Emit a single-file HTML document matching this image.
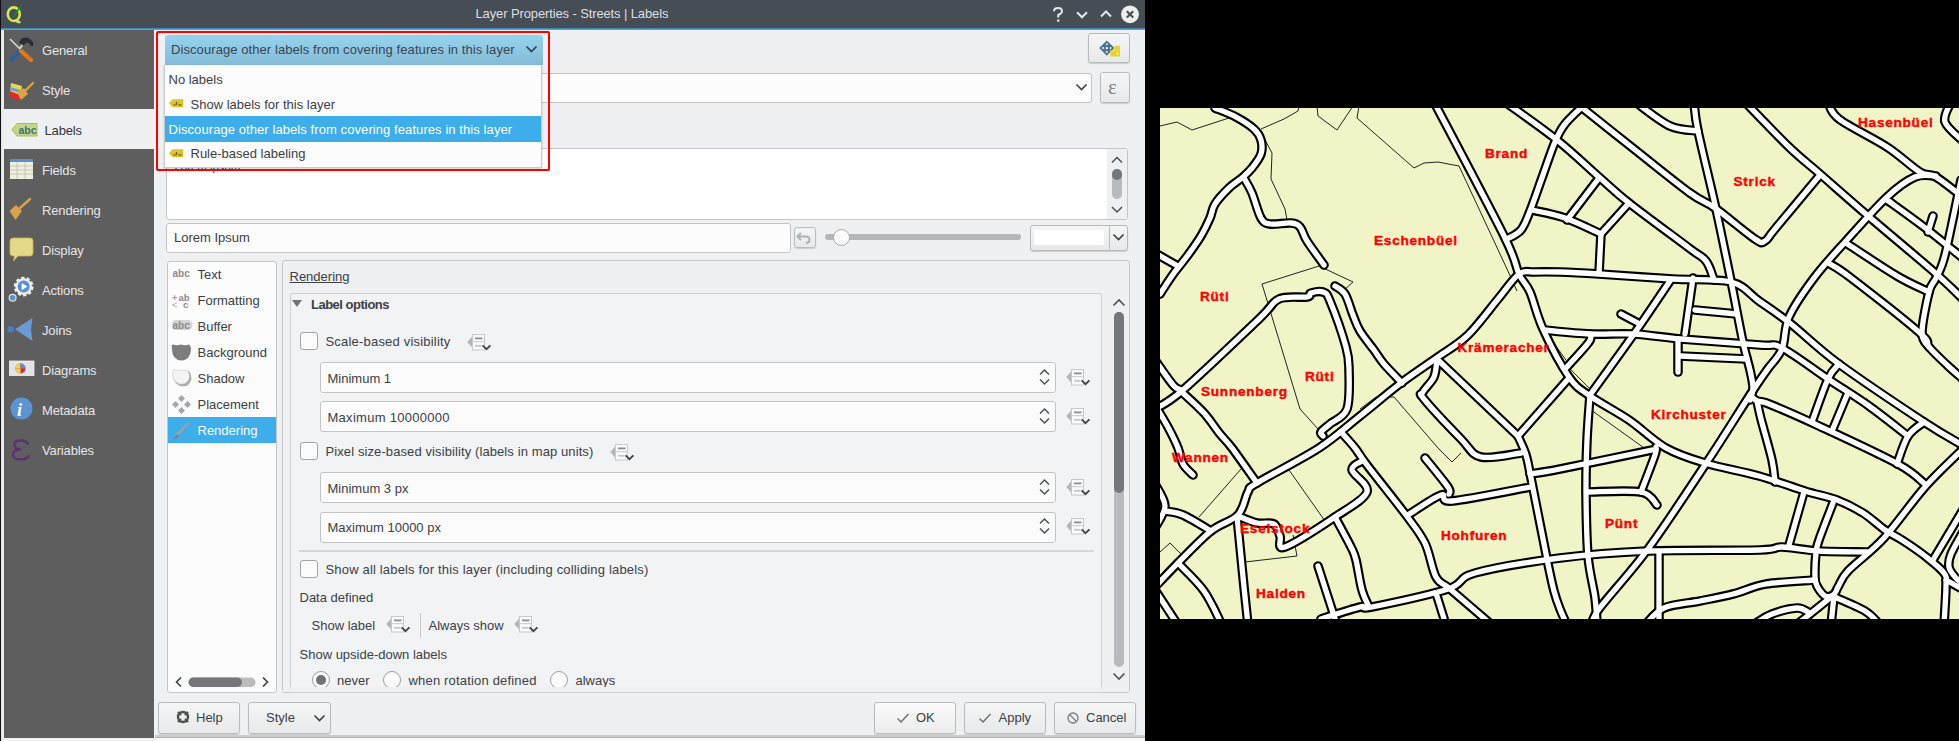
<!DOCTYPE html>
<html><head><meta charset="utf-8">
<style>
*{margin:0;padding:0;box-sizing:border-box}
html,body{width:1959px;height:741px;overflow:hidden;background:#000;font-family:"Liberation Sans",sans-serif}
.a{position:absolute}
svg.a{overflow:visible}
.t{position:absolute;font-size:13px;line-height:15px;white-space:nowrap;color:#3b4046}
.dlg{position:absolute;left:0;top:0;width:1145px;height:741px;background:#eff0f1;overflow:hidden}
.sb .t{color:#e6e6e6;letter-spacing:-0.15px}
.field{position:absolute;background:#fcfcfc;border:1px solid #c2c4c6;border-radius:3px}
.btn{position:absolute;border:1px solid #b9bbbd;border-radius:3px;background:linear-gradient(#f4f5f5,#e8e9ea);box-shadow:0 1px 1px rgba(0,0,0,.15)}
.chk{position:absolute;width:18px;height:18px;border:1px solid #a3a5a7;border-radius:3px;background:#fcfcfc}
.radio{position:absolute;width:18px;height:18px;border:1px solid #9c9ea0;border-radius:50%;background:#fcfcfc}
</style></head>
<body>
<svg width="0" height="0" style="position:absolute">
  <defs>
    <g id="dd">
      <path d="M0.3 8L5.4 2.2V13.8Z" fill="#b3b5b7"/>
      <rect x="5.5" y="0.5" width="12" height="15.5" fill="#fafafa" stroke="#c6c8ca"/>
      <path d="M5.5 7.6H17.5" stroke="#cfd1d3" stroke-width="1.2"/>
      <path d="M8 4.4H15.5" stroke="#8c8f92" stroke-width="1.8"/>
      <path d="M8 11.8H14.5" stroke="#c4c6c8" stroke-width="1.8"/>
      <path d="M15.6 11.3L19.5 15.2L23.4 11.3" fill="none" stroke="#3f4348" stroke-width="1.8"/>
    </g>
    <g id="spin">
      <path d="M1 6.5L5.5 2L10 6.5M1 11.5L5.5 16L10 11.5" fill="none" stroke="#4d5157" stroke-width="1.5"/>
    </g>
    <g id="tag">
      <path d="M0 4.2L3.5 0.3H14.3V8.2H3.5Z" fill="#d9c52c"/>
      <path d="M4.5 5.9h2M7.5 3v3M9.5 5.9h3" stroke="#6b6420" stroke-width="1.3"/>
    </g>
  </defs>
</svg>
<div class="dlg">
  <!-- title bar -->
  <div class="a" style="left:0;top:0;width:1145px;height:28px;background:#474d55"></div>
  <div class="a" style="left:0;top:28px;width:1145px;height:2px;background:linear-gradient(#3a80ab,#5eaedb)"></div>
  <div class="t" style="left:475.5px;top:6.3px;color:#dcdfe2;font-size:13px;letter-spacing:-0.12px">Layer Properties - Streets | Labels</div>
  <div class="a" style="left:0;top:0;width:1px;height:741px;background:#111"></div>
  <svg class="a" style="left:0;top:0" width="30" height="28">
    <path d="M7.5 22L10 19.5" stroke="#1f6e12" stroke-width="2.2"/>
    <ellipse cx="13.8" cy="14.2" rx="6" ry="6.8" fill="none" stroke="#d6e65a" stroke-width="2.6"/>
    <path d="M15 19.5Q17 22.5 20.5 22" fill="none" stroke="#d6e65a" stroke-width="2.4"/>
    <path d="M12.5 17.5L18 8.5Q20 6 22 5Q21.5 8 19 10L14 18Z" fill="#1d8a10"/>
  </svg>
  <svg class="a" style="left:1045px;top:0" width="100" height="28">
    <path d="M9 11.3Q9 8 13 8Q17 8 17 11.3Q17 13.5 13.2 15V17.5" fill="none" stroke="#e4e6e8" stroke-width="2"/>
    <rect x="12" y="19.5" width="2.4" height="2.2" fill="#e4e6e8"/>
    <path d="M32 12.3L37 17.3L42 12.3" fill="none" stroke="#e4e6e8" stroke-width="2"/>
    <path d="M56 16.5L61 11.5L66 16.5" fill="none" stroke="#e4e6e8" stroke-width="2"/>
    <circle cx="85" cy="14.3" r="8.9" fill="#eceded"/>
    <path d="M81.8 11.2L88.2 17.5M88.2 11.2L81.8 17.5" stroke="#474d55" stroke-width="2.1"/>
  </svg>

  <!-- sidebar -->
  <div class="sb">
    <div class="a" style="left:1px;top:30px;width:3px;height:711px;background:#e9eaeb"></div>
    <div class="a" style="left:4px;top:30px;width:150px;height:708px;background:#5e5e5e"></div>
    <div class="a" style="left:4px;top:109px;width:150px;height:40px;background:#eff0f1"></div>
    <div class="a" style="left:154px;top:30px;width:2px;height:711px;background:#f1f2f3"></div>
    <div class="t" style="left:42px;top:43px">General</div>
    <div class="t" style="left:42px;top:83px">Style</div>
    <div class="t" style="left:44.5px;top:123px;color:#31363b">Labels</div>
    <div class="t" style="left:42px;top:163px">Fields</div>
    <div class="t" style="left:42px;top:203px">Rendering</div>
    <div class="t" style="left:42px;top:243px">Display</div>
    <div class="t" style="left:42px;top:283px">Actions</div>
    <div class="t" style="left:42px;top:323px">Joins</div>
    <div class="t" style="left:42px;top:363px">Diagrams</div>
    <div class="t" style="left:42px;top:403px">Metadata</div>
    <div class="t" style="left:42px;top:443px">Variables</div>
    <!-- icons -->
    <svg class="a" style="left:0;top:30px" width="40" height="440">
      <!-- general -->
      <path d="M10 9L20 19" stroke="#d8d8d8" stroke-width="1.6"/>
      <path d="M11.5 29.5L19 22" stroke="#2e5e9e" stroke-width="4" stroke-linecap="round"/>
      <path d="M21 21L31 30" stroke="#e8780e" stroke-width="4.2" stroke-linecap="round"/>
      <path d="M19.5 11.5Q21 7.5 26 7.5Q31 8 33.5 13.5L33 16L30.5 16Q29 12.5 26.5 12.5L23 16L19.5 13Z" fill="#2b2f33"/><path d="M22.5 15L19.5 18.5" stroke="#cfcfcf" stroke-width="2"/>
      <!-- style -->
      <path d="M11 53L22 56L20 68L10 64Z" fill="#e8d84a"/>
      <path d="M10 57L21 60L20 63L10 60Z" fill="#6aa0d8"/>
      <path d="M10 61L20 65L19 71L9 66Z" fill="#e02a2a"/>
      <path d="M17 62L24 58L28 64L21 70Z" fill="#d9a24c"/>
      <path d="M25 61L33 53" stroke="#d9a24c" stroke-width="2.4" stroke-linecap="round"/>
      <!-- labels -->
      <path d="M12 99.5L17 93.5H37V106H17Z" fill="#c4d68a" stroke="#a8bd5a" stroke-width="1"/>
      <text x="18.5" y="104" font-family="Liberation Sans" font-size="10.5" font-weight="bold" fill="#3c6e78">abc</text>
      <!-- fields -->
      <rect x="10" y="129" width="23" height="20" fill="#efefe0"/>
      <rect x="10" y="129" width="23" height="3" fill="#5a8ed0"/>
      <path d="M10 136H33M10 140H33M10 144H33M17 132V149M25 132V149" stroke="#bfbfa8" stroke-width="0.8"/>
      <!-- rendering -->
      <path d="M9.5 181L16 175L22 181L15.5 190Z" fill="#d9a24c"/>
      <path d="M20 178L30 169" stroke="#d9a24c" stroke-width="2.4" stroke-linecap="round"/>
      <!-- display -->
      <path d="M13 208H30Q33 208 33 211V223Q33 226 30 226H18L13.5 231L14.5 226H13Q10 226 10 223V211Q10 208 13 208Z" fill="#e4d98a" stroke="#c8b84a" stroke-width="0.8"/>
      <!-- actions -->
      <circle cx="23.7" cy="256.6" r="8.6" fill="none" stroke="#ececec" stroke-width="2.6" stroke-dasharray="3.2 2.2"/>
      <circle cx="23.7" cy="256.6" r="8.4" fill="#ececec"/>
      <circle cx="23.7" cy="256.6" r="6" fill="#5b8fd0"/>
      <path d="M21.7 253L27.3 256.6L21.7 260.2Z" fill="#fff"/>
      <circle cx="12.6" cy="267.7" r="4" fill="#e0e0e0"/>
      <circle cx="12.6" cy="267.7" r="2.8" fill="#5b8fd0"/>
      <!-- joins -->
      <circle cx="10.7" cy="299.3" r="3.3" fill="#4a7cc0"/>
      <path d="M15 299.3L32.5 288L31 299.3L32.5 311Z" fill="#6c9ad6"/>
      <!-- diagrams -->
      <rect x="9.5" y="331" width="24.5" height="14.5" fill="#e4e4e4" stroke="#f0f0f0" stroke-width="0.8"/>
      <circle cx="20.5" cy="338.5" r="5" fill="#e02a2a"/>
      <path d="M20.5 338.5V333.5A5 5 0 0 0 15.5 338.5Z" fill="#e8d84a"/>
      <path d="M20.5 338.5V343.5A5 5 0 0 1 15.5 338.5Z" fill="#e8d84a"/>
      <path d="M20.5 338.5V333.5A5 5 0 0 1 25.5 338.5Z" fill="#5a8ed0"/>
      <!-- metadata -->
      <circle cx="21.5" cy="378.5" r="11" fill="#5b93d4"/>
      <text x="17" y="386" font-family="Liberation Serif" font-style="italic" font-weight="bold" font-size="18" fill="#fff">i</text>
      <!-- variables -->
      <path d="M28.5 414.5Q26 410.5 21 410.5Q14.5 410.5 14.5 415Q14.5 419 21 419.5Q13 419.5 13 424.5Q13 429.5 21 429.5Q27 429.5 29 425" fill="none" stroke="#5c2f72" stroke-width="2.3"/>
    </svg>
  </div>

  <!-- field combo row -->
  <div class="field" style="left:166px;top:73px;width:926px;height:30px"></div>
  <svg class="a" style="left:1075px;top:83px" width="14" height="9"><path d="M1.5 1.5L6.5 6.5L11.5 1.5" fill="none" stroke="#3b4046" stroke-width="1.6"/></svg>
  <div class="btn" style="left:1100px;top:72px;width:30px;height:31px"></div>
  <div class="t" style="left:1108px;top:77px;font-family:'Liberation Serif',serif;font-size:21px;line-height:20px;color:#7c7f82">&#949;</div>
  <div class="btn" style="left:1088px;top:33px;width:42px;height:30px"></div>
  <svg class="a" style="left:1098px;top:38px" width="24" height="20">
    <path d="M8.8 2.5L16.4 10.1L8.8 17.7L1.2 10.1Z" fill="#4f7290"/>
    <circle cx="8.8" cy="6.3" r="1" fill="#e8eef2"/><circle cx="8.8" cy="13.9" r="1" fill="#e8eef2"/>
    <circle cx="5" cy="10.1" r="1" fill="#e8eef2"/><circle cx="12.6" cy="10.1" r="1" fill="#e8eef2"/>
    <circle cx="8.8" cy="10.1" r="1.2" fill="#e8eef2"/>
    <path d="M12.3 12.2H22V18.6H12.3Z" fill="#e6d430"/><path d="M16.5 7.8H22V12.5H16.5Z" fill="#e6d430"/>
    <circle cx="19.5" cy="15.8" r="1" fill="#f6f0b0"/>
  </svg>

  <!-- textarea -->
  <div class="a" style="left:166px;top:148px;width:962px;height:72px;background:#fff;border:1px solid #c3c5c6;border-radius:3px"></div>
  <div class="a" style="left:1107px;top:149px;width:20px;height:70px;background:#eff0f1"></div>
  <svg class="a" style="left:1110px;top:155px" width="14" height="60">
    <path d="M2 7.5L7 2.5L12 7.5" fill="none" stroke="#4d5157" stroke-width="1.5"/>
    <rect x="2" y="14" width="10" height="30" rx="5" fill="#b8babd"/>
    <rect x="2" y="14" width="10" height="11" rx="5" fill="#73777c"/>
    <path d="M2 52L7 57L12 52" fill="none" stroke="#4d5157" stroke-width="1.5"/>
  </svg>
  <div class="t" style="left:174.5px;top:160px;font-size:11.4px;color:#2f3a30">Lorem ipsum</div>

  <!-- line edit + slider -->
  <div class="field" style="left:166px;top:223px;width:625px;height:30px"></div>
  <div class="t" style="left:174px;top:230px">Lorem Ipsum</div>
  <div class="btn" style="left:794px;top:227px;width:22px;height:21px"></div>
  <svg class="a" style="left:796px;top:229px" width="18" height="17"><path d="M5 4L1.5 7.5L5 11M2 7.5H10Q13.5 7.5 13.5 11Q13.5 14 10 14" fill="none" stroke="#b0b3b6" stroke-width="2"/></svg>
  <div class="a" style="left:825px;top:234px;width:196px;height:6px;border-radius:3px;background:#b4b6b8"></div>
  <div class="a" style="left:833px;top:229px;width:17px;height:17px;border-radius:50%;background:#fcfcfc;border:1px solid #a7a9ab"></div>
  <div class="btn" style="left:1030px;top:225px;width:98px;height:26px"></div>
  <div class="a" style="left:1034px;top:230px;width:70px;height:15px;background:#fff;border-radius:2px"></div>
  <div class="a" style="left:1109px;top:226px;width:1px;height:24px;background:#b9bbbd"></div>
  <svg class="a" style="left:1112px;top:233px" width="14" height="9"><path d="M1.5 1.5L6.5 6.5L11.5 1.5" fill="none" stroke="#3b4046" stroke-width="1.6"/></svg>

  <!-- tab list -->
  <div class="a" style="left:167px;top:261px;width:110px;height:432px;background:#fcfcfc;border:1px solid #c3c5c6;border-radius:3px"></div>
  <div class="a" style="left:168px;top:417px;width:108px;height:26px;background:#3daee9"></div>
  <div class="t" style="left:197.5px;top:267px">Text</div>
  <div class="t" style="left:197.5px;top:293px">Formatting</div>
  <div class="t" style="left:197.5px;top:319px">Buffer</div>
  <div class="t" style="left:197.5px;top:345px">Background</div>
  <div class="t" style="left:197.5px;top:371px">Shadow</div>
  <div class="t" style="left:197.5px;top:397px">Placement</div>
  <div class="t" style="left:197.5px;top:423px;color:#fcfcfc">Rendering</div>
  <svg class="a" style="left:168px;top:262px" width="30" height="180">
    <text x="4.5" y="15" font-family="Liberation Sans" font-weight="bold" font-size="10" fill="#8a8c8e">abc</text>
    <text x="4" y="39" font-family="Liberation Sans" font-weight="bold" font-size="9" fill="#9a9c9e">+</text>
    <text x="10.5" y="38.5" font-family="Liberation Sans" font-weight="bold" font-size="9.5" fill="#8a8c8e">ab</text>
    <text x="4" y="46" font-family="Liberation Sans" font-size="9" fill="#a0a2a4">&lt;</text>
    <text x="15" y="46" font-family="Liberation Sans" font-weight="bold" font-size="9.5" fill="#8a8c8e">c</text>
    <rect x="4" y="58" width="20" height="10" rx="4" fill="#d2d4d6"/>
    <text x="4.5" y="67" font-family="Liberation Sans" font-weight="bold" font-size="10" fill="#8a8c8e">abc</text>
    <path d="M4 87Q3 83 5 82.5Q9 84 13 82.5Q17 84 21 82.5Q23 84 23 88Q22 98 13.5 98.5Q4 98 4 87Z" fill="#7b7d80"/>
    <path d="M5 112Q4 120 12 124Q21 126 23.5 117Q23 111 21 109Q17 110 14 109Q10 110 6 108Z" fill="#a9abad"/>
    <path d="M4.5 111Q4 119 11.5 122Q20 123 21.5 115Q21 109 19.5 108Q16 109 13.5 108Q10 109 6 107.5Z" fill="#f4f4f4" stroke="#c8c8c8" stroke-width="0.6"/>
    <path d="M13.5 133L17 136.5L13.5 140L10 136.5ZM13.5 145L17 148.5L13.5 152L10 148.5ZM7.5 139L11 142.5L7.5 146L4 142.5ZM19.5 139L23 142.5L19.5 146L16 142.5Z" fill="#a6a8aa"/>
    <path d="M6 177L9 171L20 160.5L21.5 160L21 162L11 172.5Z" fill="#a0a3a6"/>
    <path d="M5.5 177.5Q7 174 9 172.5L11 174Q8.5 176.5 5.5 177.5Z" fill="#7d8083"/>
  </svg>
  <!-- h scrollbar -->
  <svg class="a" style="left:170px;top:674px" width="104" height="16">
    <path d="M11 3.5L6.5 8L11 12.5" fill="none" stroke="#3b4046" stroke-width="1.6"/>
    <rect x="18.5" y="3.5" width="67" height="9.5" rx="4.75" fill="#b9bbbe"/>
    <rect x="18.5" y="3.5" width="53.5" height="9.5" rx="4.75" fill="#73777c"/>
    <path d="M93 3.5L97.5 8L93 12.5" fill="none" stroke="#3b4046" stroke-width="1.6"/>
  </svg>

  <!-- right panel -->
  <div class="a" style="left:282px;top:260px;width:848px;height:433px;background:#eff0f1;border:1px solid #c3c5c6;border-radius:3px"></div>
  <div class="t" style="left:289.5px;top:269px;text-decoration:underline">Rendering</div>
  <div class="a" style="left:290px;top:293px;width:812px;height:400px;border:1px solid #cdcfd0;border-radius:3px;background:#f2f3f4"></div>
  <div class="t" style="left:311px;top:297px;font-weight:bold;letter-spacing:-0.5px">Label options</div>
  <svg class="a" style="left:292px;top:300px" width="11" height="8"><path d="M0 0H10L5 7Z" fill="#6f7377"/></svg>
  <div class="chk" style="left:300px;top:332px"></div>
  <div class="t" style="left:325.5px;top:334px;letter-spacing:0.2px">Scale-based visibility</div>
  <svg class="a" style="left:467px;top:334px" width="25" height="18"><use href="#dd"/></svg>
  <div class="field" style="left:320px;top:362px;width:736px;height:31px"></div>
  <div class="t" style="left:327.5px;top:371px">Minimum 1</div>
  <svg class="a" style="left:1039px;top:368px" width="12" height="18"><use href="#spin"/></svg>
  <svg class="a" style="left:1066px;top:369px" width="25" height="18"><use href="#dd"/></svg>
  <div class="field" style="left:320px;top:401px;width:736px;height:31px"></div>
  <div class="t" style="left:327.5px;top:410px;letter-spacing:0.28px">Maximum 10000000</div>
  <svg class="a" style="left:1039px;top:407px" width="12" height="18"><use href="#spin"/></svg>
  <svg class="a" style="left:1066px;top:408px" width="25" height="18"><use href="#dd"/></svg>
  <div class="chk" style="left:300px;top:442px"></div>
  <div class="t" style="left:325.5px;top:444px;letter-spacing:0.1px">Pixel size-based visibility (labels in map units)</div>
  <svg class="a" style="left:610px;top:444px" width="25" height="18"><use href="#dd"/></svg>
  <div class="field" style="left:320px;top:472px;width:736px;height:31px"></div>
  <div class="t" style="left:327.5px;top:481px">Minimum 3 px</div>
  <svg class="a" style="left:1039px;top:478px" width="12" height="18"><use href="#spin"/></svg>
  <svg class="a" style="left:1066px;top:479px" width="25" height="18"><use href="#dd"/></svg>
  <div class="field" style="left:320px;top:512px;width:736px;height:31px"></div>
  <div class="t" style="left:327.5px;top:520px">Maximum 10000 px</div>
  <svg class="a" style="left:1039px;top:517px" width="12" height="18"><use href="#spin"/></svg>
  <svg class="a" style="left:1066px;top:518px" width="25" height="18"><use href="#dd"/></svg>
  <div class="a" style="left:299px;top:550px;width:795px;height:2px;background:#d5d7d8"></div>
  <div class="chk" style="left:300px;top:560px"></div>
  <div class="t" style="left:325.5px;top:562px;letter-spacing:0.17px">Show all labels for this layer (including colliding labels)</div>
  <div class="t" style="left:299.5px;top:590px">Data defined</div>
  <div class="t" style="left:311.5px;top:618px">Show label</div>
  <svg class="a" style="left:386px;top:616px" width="25" height="18"><use href="#dd"/></svg>
  <div class="a" style="left:420px;top:613px;width:1px;height:25px;background:#c8cacb"></div>
  <div class="t" style="left:428.5px;top:618px">Always show</div>
  <svg class="a" style="left:514px;top:616px" width="25" height="18"><use href="#dd"/></svg>
  <div class="t" style="left:299.5px;top:647px">Show upside-down labels</div>
  <div class="a" style="left:291px;top:660px;width:810px;height:26.5px;overflow:hidden">
    <div class="radio" style="left:21px;top:11px"><div class="a" style="left:3px;top:3px;width:10px;height:10px;border-radius:50%;background:#6f7377"></div></div>
    <div class="t" style="left:46px;top:13px">never</div>
    <div class="radio" style="left:92px;top:11px"></div>
    <div class="t" style="left:117.5px;top:13px;letter-spacing:0.18px">when rotation defined</div>
    <div class="radio" style="left:259px;top:11px"></div>
    <div class="t" style="left:284.5px;top:13px">always</div>
  </div>
  <div class="a" style="left:283px;top:686.5px;width:846px;height:5.5px;background:#eff0f1"></div>
  <div class="a" style="left:290px;top:294px;width:1px;height:392px;background:#cdcfd0"></div>
  <div class="a" style="left:1101px;top:294px;width:1px;height:392px;background:#cdcfd0"></div>
  <!-- v scrollbar -->
  <svg class="a" style="left:1112px;top:298px" width="14" height="9"><path d="M1.5 7.5L7 2L12.5 7.5" fill="none" stroke="#4d5157" stroke-width="1.6"/></svg>
  <div class="a" style="left:1114px;top:312px;width:10px;height:355px;border-radius:5px;background:#b8babd"></div>
  <div class="a" style="left:1114px;top:312px;width:10px;height:181px;border-radius:5px;background:#73777c"></div>
  <svg class="a" style="left:1112px;top:672px" width="14" height="9"><path d="M1.5 1.5L7 7L12.5 1.5" fill="none" stroke="#4d5157" stroke-width="1.6"/></svg>

  <!-- bottom buttons -->
  <div class="btn" style="left:158px;top:702px;width:82px;height:32px"></div>
  <svg class="a" style="left:176px;top:710px" width="14" height="14">
    <circle cx="7" cy="7" r="5" fill="none" stroke="#4d5157" stroke-width="2.4"/>
    <path d="M2 2L5 5M12 2L9 5M2 12L5 9M12 12L9 9" stroke="#4d5157" stroke-width="2.4"/>
  </svg>
  <div class="t" style="left:196px;top:710px">Help</div>
  <div class="btn" style="left:248px;top:702px;width:83px;height:32px"></div>
  <div class="t" style="left:266px;top:710px">Style</div>
  <svg class="a" style="left:313px;top:714px" width="14" height="9"><path d="M1.5 1.5L6.5 6.5L11.5 1.5" fill="none" stroke="#3b4046" stroke-width="1.6"/></svg>
  <div class="btn" style="left:874px;top:702px;width:82px;height:32px;background:linear-gradient(#fafafa,#ededee)"></div>
  <svg class="a" style="left:896px;top:712px" width="14" height="12"><path d="M1.5 6.5L5 10L12.5 2" fill="none" stroke="#6b6f73" stroke-width="1.4"/></svg>
  <div class="t" style="left:916px;top:710px">OK</div>
  <div class="btn" style="left:964px;top:702px;width:82px;height:32px"></div>
  <svg class="a" style="left:978px;top:712px" width="14" height="12"><path d="M1.5 6.5L5 10L12.5 2" fill="none" stroke="#6b6f73" stroke-width="1.4"/></svg>
  <div class="t" style="left:998.5px;top:710px">Apply</div>
  <div class="btn" style="left:1054px;top:702px;width:82px;height:32px"></div>
  <svg class="a" style="left:1066px;top:711px" width="14" height="14"><circle cx="7" cy="7" r="5" fill="none" stroke="#7a7e82" stroke-width="1.3"/><path d="M3.5 3.5L10.5 10.5" stroke="#7a7e82" stroke-width="1.3"/></svg>
  <div class="t" style="left:1086px;top:710px">Cancel</div>
  <div class="a" style="left:155px;top:738px;width:990px;height:3px;background:#fafafa"></div>
  <div class="a" style="left:155px;top:735px;width:990px;height:3px;background:#cbcccd"></div><div class="a" style="left:155px;top:737px;width:990px;height:1px;background:#b3b4b6"></div>

  <!-- popup -->
  <div class="a" style="left:165px;top:35px;width:378px;height:30px;border-radius:3px 3px 0 0;background:linear-gradient(#96d3ef,#84bbd6)"></div>
  <div class="t" style="left:171px;top:42px;color:#3a4450;letter-spacing:0.08px">Discourage other labels from covering features in this layer</div>
  <svg class="a" style="left:525px;top:45px" width="14" height="9"><path d="M1.5 1.5L6.5 6.5L11.5 1.5" fill="none" stroke="#3b4046" stroke-width="1.7"/></svg>
  <div class="a" style="left:164px;top:65px;width:378px;height:103px;background:#fcfcfc;border:1px solid #c8cacc;border-top:none;box-shadow:0 1px 2px rgba(0,0,0,.2)"></div>
  <div class="t" style="left:168.5px;top:72px">No labels</div>
  <svg class="a" style="left:169px;top:99.3px" width="15" height="9"><use href="#tag"/></svg>
  <div class="t" style="left:190.5px;top:96.5px">Show labels for this layer</div>
  <div class="a" style="left:165px;top:116.3px;width:376px;height:25.3px;background:#3daee9"></div>
  <div class="t" style="left:168.5px;top:121.5px;color:#fcfcfc;letter-spacing:0.08px">Discourage other labels from covering features in this layer</div>
  <svg class="a" style="left:169px;top:149.3px" width="15" height="9"><use href="#tag"/></svg>
  <div class="t" style="left:190.5px;top:146px">Rule-based labeling</div>
  <div class="a" style="left:156px;top:30.9px;width:394.4px;height:140.4px;border:2.4px solid #f00;border-radius:2px"></div>
</div>

<!-- map -->
<svg class="a" style="left:1160px;top:108px;overflow:hidden" width="799" height="511" viewBox="0 0 799 511">
<rect width="799" height="511" fill="#f0f4c6"/>
<g fill="none" stroke="#222" stroke-width="1" stroke-linejoin="round">
<path d="M0.0 18.0 L17.0 14.0 L32.0 22.0 L69.0 10.0"/>
<path d="M101.0 21.0 L124.0 11.0 L138.0 3.0 L139.0 -2.0"/>
<path d="M103.0 28.0 L112.0 45.0 L111.0 71.0 L125.0 101.0 L127.0 112.0"/>
<path d="M157.0 -2.0 L158.0 8.0 L177.0 22.0 L193.0 -2.0"/>
<path d="M199.0 -2.0 L197.0 10.0 L254.0 60.0 L264.0 55.0 L278.0 54.0 L299.0 58.0 L347.0 161.0 L357.0 183.0"/>
<path d="M102.0 176.0 L159.0 158.0 L193.0 174.0 L183.0 183.0"/>
<path d="M102.0 176.0 L140.0 301.0 L158.0 321.0"/>
<path d="M367.0 176.0 L381.0 214.0 L405.0 256.0"/>
<path d="M39.0 409.0 L81.0 361.0"/>
<path d="M85.0 454.0 L137.0 448.0 L133.0 427.0"/>
<path d="M129.0 362.0 L165.0 413.0"/>
<path d="M0.0 444.0 L10.0 435.0 L23.0 448.0"/>
<path d="M386.8 225.5 L406.2 252.3"/>
<path d="M408.7 259.6 L430.6 281.5"/>
<path d="M435.4 286.4 L446.4 296.1 L444.0 299.0"/>
<path d="M433.0 303.4 L484.0 339.9"/>
<path d="M200.0 301.0 L216.0 289.0 L234.0 289.0 L278.0 340.0 L292.0 354.0 L301.0 345.0"/>
<path d="M367.0 177.0 L384.3 218.2"/>
<path d="M76.0 402.0 L90.0 382.0 L165.0 331.0 L217.0 290.0"/>
</g><g fill="none" stroke="#000" stroke-width="9.6" stroke-linejoin="round" stroke-linecap="round">
<path d="M55.0 0.0 C58.5 1.5 69.5 5.5 76.0 9.0 C82.5 12.5 89.8 17.2 94.0 21.0 C98.2 24.8 99.8 27.8 101.0 32.0 C102.2 36.2 102.5 41.3 101.0 46.0 C99.5 50.7 95.0 56.2 92.0 60.0 C89.0 63.8 86.8 65.7 83.0 69.0 C79.2 72.3 73.7 75.5 69.0 80.0 C64.3 84.5 58.2 91.0 55.0 96.0 C51.8 101.0 52.3 104.7 50.0 110.0 C47.7 115.3 44.7 121.8 41.0 128.0 C37.3 134.2 32.5 140.8 28.0 147.0 C23.5 153.2 18.7 158.5 14.0 165.0 C9.3 171.5 2.3 182.5 0.0 186.0"/>
<path d="M84.0 70.0 C85.3 72.5 89.2 78.3 92.0 85.0 C94.8 91.7 98.0 104.8 101.0 110.0 C104.0 115.2 105.0 115.2 110.0 116.0 C115.0 116.8 126.0 114.5 131.0 115.0 C136.0 115.5 137.3 116.0 140.0 119.0 C142.7 122.0 143.0 126.7 147.0 133.0 C151.0 139.3 161.2 153.0 164.0 157.0"/>
<path d="M-5.0 145.0 L16.0 157.0"/>
<path d="M-5.0 301.0 C-0.3 297.8 5.7 297.0 23.0 282.0 C40.3 267.0 83.0 226.2 99.0 211.0 C115.0 195.8 111.0 194.7 119.0 191.0 C127.0 187.3 141.7 190.0 147.0 189.0 C152.3 188.0 148.3 185.8 151.0 185.0 C153.7 184.2 159.8 182.7 163.0 184.0 C166.2 185.3 166.2 183.8 170.0 193.0 C173.8 202.2 182.8 227.5 186.0 239.0 C189.2 250.5 188.8 251.7 189.0 262.0 C189.2 272.3 190.2 292.0 187.0 301.0 C183.8 310.0 174.3 312.2 170.0 316.0 C165.7 319.8 162.2 322.0 161.0 324.0 C159.8 326.0 162.7 327.3 163.0 328.0"/>
<path d="M175.0 178.0 C176.7 179.3 182.0 181.2 185.0 186.0 C188.0 190.8 190.5 200.8 193.0 207.0 C195.5 213.2 196.5 217.2 200.0 223.0 C203.5 228.8 210.0 236.5 214.0 242.0 C218.0 247.5 219.3 250.5 224.0 256.0 C228.7 261.5 239.0 271.8 242.0 275.0"/>
<path d="M-5.0 252.0 C-1.8 256.3 9.3 273.0 14.0 278.0 C18.7 283.0 21.5 281.3 23.0 282.0"/>
<path d="M23.0 285.0 C26.5 288.3 37.8 298.2 44.0 305.0 C50.2 311.8 55.3 320.2 60.0 326.0 C64.7 331.8 65.8 331.8 72.0 340.0 C78.2 348.2 92.8 369.2 97.0 375.0"/>
<path d="M-5.0 297.0 C-2.7 301.0 5.2 313.8 9.0 321.0 C12.8 328.2 15.7 334.2 18.0 340.0 C20.3 345.8 20.5 351.5 23.0 356.0 C25.5 360.5 31.3 365.2 33.0 367.0"/>
<path d="M-5.0 479.0 C-1.2 475.0 8.7 464.3 18.0 455.0 C27.3 445.7 41.0 431.0 51.0 423.0 C61.0 415.0 71.8 413.5 78.0 407.0 C84.2 400.5 84.8 389.3 88.0 384.0 C91.2 378.7 85.2 382.3 97.0 375.0 C108.8 367.7 141.8 351.2 159.0 340.0 C176.2 328.8 186.3 318.8 200.0 308.0 C213.7 297.2 228.0 284.8 241.0 275.0 C254.0 265.2 266.8 257.0 278.0 249.0 C289.2 241.0 298.0 236.7 308.0 227.0 C318.0 217.3 329.5 201.2 338.0 191.0 C346.5 180.8 353.0 170.5 359.0 166.0 C365.0 161.5 367.2 164.3 374.0 164.0 C380.8 163.7 389.2 163.7 400.0 164.0 C410.8 164.3 420.2 164.8 439.0 166.0 C457.8 167.2 491.0 169.7 513.0 171.0 C535.0 172.3 556.7 170.3 571.0 174.0 C585.3 177.7 589.0 186.0 599.0 193.0 C609.0 200.0 617.7 205.5 631.0 216.0 C644.3 226.5 656.8 239.7 679.0 256.0 C701.2 272.3 743.2 300.3 764.0 314.0 C784.8 327.7 797.3 334.0 804.0 338.0"/>
<path d="M274.0 -6.0 C285.7 16.3 329.8 99.3 344.0 128.0 C358.2 156.7 354.7 156.7 359.0 166.0 C363.3 175.3 366.0 174.8 370.0 184.0 C374.0 193.2 376.5 206.8 383.0 221.0 C389.5 235.2 401.2 257.8 409.0 269.0 C416.8 280.2 420.0 280.8 430.0 288.0 C440.0 295.2 456.3 303.3 469.0 312.0 C481.7 320.7 493.3 332.8 506.0 340.0 C518.7 347.2 529.5 350.3 545.0 355.0 C560.5 359.7 582.3 363.3 599.0 368.0 C615.7 372.7 632.0 379.0 645.0 383.0 C658.0 387.0 667.3 388.3 677.0 392.0 C686.7 395.7 695.0 400.0 703.0 405.0 C711.0 410.0 718.5 417.5 725.0 422.0 C731.5 426.5 735.3 427.7 742.0 432.0 C748.7 436.3 758.0 442.5 765.0 448.0 C772.0 453.5 780.5 460.0 784.0 465.0 C787.5 470.0 786.0 469.3 786.0 478.0 C786.0 486.7 784.3 510.5 784.0 517.0"/>
<path d="M345.0 -6.0 C353.7 0.3 381.3 19.5 397.0 32.0 C412.7 44.5 427.0 58.5 439.0 69.0 C451.0 79.5 454.0 83.2 469.0 95.0 C484.0 106.8 516.2 130.3 529.0 140.0 C541.8 149.7 541.8 147.7 546.0 153.0 C550.2 158.3 552.7 168.8 554.0 172.0"/>
<path d="M425.0 -4.0 C421.7 -0.7 410.0 9.7 405.0 16.0 C400.0 22.3 398.7 25.5 395.0 34.0 C391.3 42.5 387.2 55.5 383.0 67.0 C378.8 78.5 373.7 93.8 370.0 103.0 C366.3 112.2 364.8 117.3 361.0 122.0 C357.2 126.7 349.3 129.5 347.0 131.0"/>
<path d="M372.0 102.0 C377.5 103.3 393.5 106.0 405.0 110.0 C416.5 114.0 435.0 123.3 441.0 126.0"/>
<path d="M441.0 126.0 L469.0 95.0"/>
<path d="M407.0 112.0 L439.0 70.0"/>
<path d="M441.0 126.0 L439.0 165.0"/>
<path d="M415.0 -6.0 C424.8 1.8 454.8 25.8 474.0 41.0 C493.2 56.2 516.5 75.2 530.0 85.0 C543.5 94.8 544.2 92.3 555.0 100.0 C565.8 107.7 586.7 125.5 595.0 131.0 C603.3 136.5 601.7 134.7 605.0 133.0 C608.3 131.3 605.8 132.0 615.0 121.0 C624.2 110.0 652.5 76.0 660.0 67.0"/>
<path d="M585.0 -6.0 C592.3 1.5 616.5 27.0 629.0 39.0 C641.5 51.0 647.0 54.7 660.0 66.0 C673.0 77.3 688.2 90.8 707.0 107.0 C725.8 123.2 756.8 148.8 773.0 163.0 C789.2 177.2 798.8 187.2 804.0 192.0"/>
<path d="M668.0 -6.0 C669.8 -3.2 669.2 3.5 679.0 11.0 C688.8 18.5 713.5 30.2 727.0 39.0 C740.5 47.8 751.8 59.0 760.0 64.0 C768.2 69.0 768.7 64.7 776.0 69.0 C783.3 73.3 799.3 86.5 804.0 90.0"/>
<path d="M776.0 68.0 C772.5 68.2 763.2 65.5 755.0 69.0 C746.8 72.5 738.5 78.3 727.0 89.0 C715.5 99.7 698.2 119.5 686.0 133.0 C673.8 146.5 663.5 157.3 654.0 170.0 C644.5 182.7 634.3 197.2 629.0 209.0 C623.7 220.8 625.7 232.2 622.0 241.0 C618.3 249.8 612.3 254.3 607.0 262.0 C601.7 269.7 600.0 271.7 590.0 287.0 C580.0 302.3 564.0 328.3 547.0 354.0 C530.0 379.7 506.0 416.5 488.0 441.0 C470.0 465.5 448.3 488.3 439.0 501.0 C429.7 513.7 433.2 514.3 432.0 517.0"/>
<path d="M727.0 92.0 C733.2 96.5 751.2 109.2 764.0 119.0 C776.8 128.8 797.3 145.7 804.0 151.0"/>
<path d="M773.0 108.0 L768.0 124.0"/>
<path d="M686.0 135.0 C694.5 140.5 723.2 159.8 737.0 168.0 C750.8 176.2 763.7 181.3 769.0 184.0"/>
<path d="M670.0 156.0 C673.5 158.3 676.0 158.5 691.0 170.0 C706.0 181.5 747.0 213.5 760.0 225.0 C773.0 236.5 764.5 233.7 769.0 239.0 C773.5 244.3 781.2 251.5 787.0 257.0 C792.8 262.5 801.2 269.5 804.0 272.0"/>
<path d="M801.0 72.0 C798.3 84.5 789.2 130.7 785.0 147.0 C780.8 163.3 778.7 163.8 776.0 170.0 C773.3 176.2 771.3 174.8 769.0 184.0 C766.7 193.2 762.0 215.8 762.0 225.0 C762.0 234.2 767.8 236.7 769.0 239.0"/>
<path d="M791.0 -6.0 C790.0 -2.7 782.8 7.3 785.0 14.0 C787.2 20.7 800.8 30.7 804.0 34.0"/>
<path d="M534.0 -6.0 C534.7 -1.2 534.3 5.2 538.0 23.0 C541.7 40.8 550.5 76.0 556.0 101.0 C561.5 126.0 566.5 150.8 571.0 173.0 C575.5 195.2 579.8 219.2 583.0 234.0 C586.2 248.8 588.3 254.3 590.0 262.0 C591.7 269.7 593.0 275.0 593.0 280.0 C593.0 285.0 590.5 290.0 590.0 292.0"/>
<path d="M478.0 -4.0 C483.3 -0.3 500.0 13.5 510.0 18.0 C520.0 22.5 533.3 22.2 538.0 23.0"/>
<path d="M533.0 170.0 L525.0 226.0"/>
<path d="M535.0 202.0 L577.0 206.0"/>
<path d="M518.0 231.0 L518.0 264.0"/>
<path d="M520.0 248.0 L587.0 251.0"/>
<path d="M384.0 222.0 C391.7 222.7 415.0 225.3 430.0 226.0 C445.0 226.7 458.8 225.2 474.0 226.0 C489.2 226.8 500.0 229.2 521.0 231.0 C542.0 232.8 583.2 235.5 600.0 237.0 C616.8 238.5 610.7 234.3 622.0 240.0 C633.3 245.7 653.5 261.3 668.0 271.0 C682.5 280.7 695.7 288.5 709.0 298.0 C722.3 307.5 741.5 323.0 748.0 328.0"/>
<path d="M679.0 256.0 C677.2 258.5 672.5 261.3 668.0 271.0 C663.5 280.7 654.7 306.8 652.0 314.0"/>
<path d="M687.0 287.0 L672.0 323.0"/>
<path d="M764.0 314.0 C761.3 316.3 752.5 321.0 748.0 328.0 C743.5 335.0 738.8 351.3 737.0 356.0"/>
<path d="M590.0 287.0 C591.2 288.0 593.8 291.5 597.0 293.0 C600.2 294.5 598.7 291.8 609.0 296.0 C619.3 300.2 637.5 308.0 659.0 318.0 C680.5 328.0 720.3 346.3 738.0 356.0 C755.7 365.7 760.5 372.7 765.0 376.0"/>
<path d="M597.0 293.0 C597.7 296.0 598.5 301.2 601.0 311.0 C603.5 320.8 609.7 341.5 612.0 352.0 C614.3 362.5 614.5 370.3 615.0 374.0"/>
<path d="M804.0 340.0 C797.5 346.5 778.3 364.0 765.0 379.0 C751.7 394.0 736.8 416.0 724.0 430.0 C711.2 444.0 695.7 454.8 688.0 463.0 C680.3 471.2 680.7 474.8 678.0 479.0 C675.3 483.2 678.3 482.2 672.0 488.0 C665.7 493.8 645.3 509.7 640.0 514.0"/>
<path d="M644.0 384.0 L629.0 437.0"/>
<path d="M673.0 395.0 C670.7 401.2 661.8 423.7 659.0 432.0 C656.2 440.3 656.7 438.8 656.0 445.0 C655.3 451.2 654.8 463.5 655.0 469.0 C655.2 474.5 655.3 474.8 657.0 478.0 C658.7 481.2 662.5 486.3 665.0 488.0 C667.5 489.7 670.8 488.0 672.0 488.0"/>
<path d="M161.0 511.0 C167.5 509.0 191.5 501.0 200.0 499.0 C208.5 497.0 197.3 502.0 212.0 499.0 C226.7 496.0 270.8 486.7 288.0 481.0 C305.2 475.3 296.3 470.2 315.0 465.0 C333.7 459.8 371.2 453.7 400.0 450.0 C428.8 446.3 454.7 444.3 488.0 443.0 C521.3 441.7 577.7 442.7 600.0 442.0 C622.3 441.3 612.2 438.8 622.0 439.0 C631.8 439.2 644.8 442.2 659.0 443.0 C673.2 443.8 699.0 443.8 707.0 444.0"/>
<path d="M485.0 517.0 C488.2 514.2 494.8 504.0 504.0 500.0 C513.2 496.0 528.5 495.3 540.0 493.0 C551.5 490.7 562.0 488.8 573.0 486.0 C584.0 483.2 592.3 478.3 606.0 476.0 C619.7 473.7 646.8 472.7 655.0 472.0"/>
<path d="M593.0 517.0 C596.2 515.2 604.7 508.8 612.0 506.0 C619.3 503.2 631.0 500.3 637.0 500.0 C643.0 499.7 646.2 503.3 648.0 504.0"/>
<path d="M672.0 488.0 C677.5 490.5 697.0 498.2 705.0 503.0 C713.0 507.8 717.5 514.7 720.0 517.0"/>
<path d="M674.0 488.0 L671.0 517.0"/>
<path d="M804.0 400.0 L773.0 452.0"/>
<path d="M804.0 422.0 C801.8 426.0 793.5 439.8 791.0 446.0 C788.5 452.2 788.3 455.2 789.0 459.0 C789.7 462.8 792.5 466.0 795.0 469.0 C797.5 472.0 802.5 475.7 804.0 477.0"/>
<path d="M786.0 472.0 L804.0 482.0"/>
<path d="M499.0 444.0 L499.0 517.0"/>
<path d="M510.0 173.0 C504.3 181.3 489.3 204.0 476.0 223.0 C462.7 242.0 437.7 276.3 430.0 287.0"/>
<path d="M430.0 287.0 C429.5 294.5 427.7 315.5 427.0 332.0 C426.3 348.5 425.8 366.7 426.0 386.0 C426.2 405.3 426.5 430.7 428.0 448.0 C429.5 465.3 433.5 478.5 435.0 490.0 C436.5 501.5 436.7 512.5 437.0 517.0"/>
<path d="M428.0 384.0 C436.8 384.0 469.5 381.8 481.0 384.0 C492.5 386.2 494.3 394.8 497.0 397.0"/>
<path d="M481.0 384.0 C483.3 377.8 492.5 354.5 495.0 347.0 C497.5 339.5 495.8 340.3 496.0 339.0"/>
<path d="M370.0 366.0 C375.0 365.2 379.7 365.0 400.0 361.0 C420.3 357.0 476.7 345.2 492.0 342.0"/>
<path d="M461.0 206.0 L478.0 215.0"/>
<path d="M430.0 226.0 C429.8 227.3 433.0 228.3 429.0 234.0 C425.0 239.7 409.8 255.7 406.0 260.0"/>
<path d="M409.0 270.0 L358.0 328.0"/>
<path d="M279.0 253.0 L358.0 328.0"/>
<path d="M358.0 328.0 C359.3 331.2 363.8 340.0 366.0 347.0 C368.2 354.0 367.5 352.7 371.0 370.0 C374.5 387.3 383.2 432.2 387.0 451.0 C390.8 469.8 391.8 474.7 394.0 483.0 C396.2 491.3 397.8 495.3 400.0 501.0 C402.2 506.7 405.8 514.3 407.0 517.0"/>
<path d="M277.0 251.0 C276.5 254.0 276.3 263.5 274.0 269.0 C271.7 274.5 264.7 280.3 263.0 284.0 C261.3 287.7 257.7 283.2 264.0 291.0 C270.3 298.8 291.5 321.3 301.0 331.0 C310.5 340.7 311.0 346.7 321.0 349.0 C331.0 351.3 354.3 345.7 361.0 345.0"/>
<path d="M181.0 324.0 C183.3 326.7 190.7 334.5 195.0 340.0 C199.3 345.5 198.5 345.8 207.0 357.0 C215.5 368.2 236.3 394.0 246.0 407.0 C255.7 420.0 260.0 424.7 265.0 435.0 C270.0 445.3 271.8 461.3 276.0 469.0 C280.2 476.7 280.7 473.0 290.0 481.0 C299.3 489.0 325.0 511.0 332.0 517.0"/>
<path d="M265.0 350.0 C268.8 354.8 284.0 373.0 288.0 379.0 C292.0 385.0 288.8 384.8 289.0 386.0"/>
<path d="M248.0 407.0 C253.5 403.7 273.7 389.3 281.0 387.0 C288.3 384.7 277.0 394.3 292.0 393.0 C307.0 391.7 357.8 381.3 371.0 379.0"/>
<path d="M276.0 485.0 L286.0 517.0"/>
<path d="M175.0 409.0 C177.7 414.0 187.5 431.8 191.0 439.0 C194.5 446.2 194.2 444.8 196.0 452.0 C197.8 459.2 199.8 474.2 202.0 482.0 C204.2 489.8 207.8 496.2 209.0 499.0"/>
<path d="M78.0 408.0 C81.2 409.2 91.0 413.7 97.0 415.0 C103.0 416.3 110.2 413.8 114.0 416.0 C117.8 418.2 118.2 424.2 120.0 428.0 C121.8 431.8 115.8 442.2 125.0 439.0 C134.2 435.8 161.3 418.2 175.0 409.0 C188.7 399.8 204.2 391.8 207.0 384.0 C209.8 376.2 192.8 367.2 192.0 362.0 C191.2 356.8 200.3 354.5 202.0 353.0"/>
<path d="M158.0 458.0 L177.0 517.0"/>
<path d="M77.0 408.0 C78.0 418.2 81.2 450.8 83.0 469.0 C84.8 487.2 87.2 509.0 88.0 517.0"/>
<path d="M18.0 455.0 C22.3 459.7 36.7 472.7 44.0 483.0 C51.3 493.3 59.0 511.3 62.0 517.0"/>
<path d="M-5.0 482.0 L18.0 517.0"/>
<path d="M-5.0 376.0 C-3.3 379.7 5.0 390.7 5.0 398.0 C5.0 405.3 -3.3 416.3 -5.0 420.0"/>
<path d="M5.0 403.0 C8.0 403.7 15.3 403.7 23.0 407.0 C30.7 410.3 46.3 420.3 51.0 423.0"/>
</g><g fill="none" stroke="#fff" stroke-width="5.3" stroke-linejoin="round" stroke-linecap="round">
<path d="M55.0 0.0 C58.5 1.5 69.5 5.5 76.0 9.0 C82.5 12.5 89.8 17.2 94.0 21.0 C98.2 24.8 99.8 27.8 101.0 32.0 C102.2 36.2 102.5 41.3 101.0 46.0 C99.5 50.7 95.0 56.2 92.0 60.0 C89.0 63.8 86.8 65.7 83.0 69.0 C79.2 72.3 73.7 75.5 69.0 80.0 C64.3 84.5 58.2 91.0 55.0 96.0 C51.8 101.0 52.3 104.7 50.0 110.0 C47.7 115.3 44.7 121.8 41.0 128.0 C37.3 134.2 32.5 140.8 28.0 147.0 C23.5 153.2 18.7 158.5 14.0 165.0 C9.3 171.5 2.3 182.5 0.0 186.0"/>
<path d="M84.0 70.0 C85.3 72.5 89.2 78.3 92.0 85.0 C94.8 91.7 98.0 104.8 101.0 110.0 C104.0 115.2 105.0 115.2 110.0 116.0 C115.0 116.8 126.0 114.5 131.0 115.0 C136.0 115.5 137.3 116.0 140.0 119.0 C142.7 122.0 143.0 126.7 147.0 133.0 C151.0 139.3 161.2 153.0 164.0 157.0"/>
<path d="M-5.0 145.0 L16.0 157.0"/>
<path d="M-5.0 301.0 C-0.3 297.8 5.7 297.0 23.0 282.0 C40.3 267.0 83.0 226.2 99.0 211.0 C115.0 195.8 111.0 194.7 119.0 191.0 C127.0 187.3 141.7 190.0 147.0 189.0 C152.3 188.0 148.3 185.8 151.0 185.0 C153.7 184.2 159.8 182.7 163.0 184.0 C166.2 185.3 166.2 183.8 170.0 193.0 C173.8 202.2 182.8 227.5 186.0 239.0 C189.2 250.5 188.8 251.7 189.0 262.0 C189.2 272.3 190.2 292.0 187.0 301.0 C183.8 310.0 174.3 312.2 170.0 316.0 C165.7 319.8 162.2 322.0 161.0 324.0 C159.8 326.0 162.7 327.3 163.0 328.0"/>
<path d="M175.0 178.0 C176.7 179.3 182.0 181.2 185.0 186.0 C188.0 190.8 190.5 200.8 193.0 207.0 C195.5 213.2 196.5 217.2 200.0 223.0 C203.5 228.8 210.0 236.5 214.0 242.0 C218.0 247.5 219.3 250.5 224.0 256.0 C228.7 261.5 239.0 271.8 242.0 275.0"/>
<path d="M-5.0 252.0 C-1.8 256.3 9.3 273.0 14.0 278.0 C18.7 283.0 21.5 281.3 23.0 282.0"/>
<path d="M23.0 285.0 C26.5 288.3 37.8 298.2 44.0 305.0 C50.2 311.8 55.3 320.2 60.0 326.0 C64.7 331.8 65.8 331.8 72.0 340.0 C78.2 348.2 92.8 369.2 97.0 375.0"/>
<path d="M-5.0 297.0 C-2.7 301.0 5.2 313.8 9.0 321.0 C12.8 328.2 15.7 334.2 18.0 340.0 C20.3 345.8 20.5 351.5 23.0 356.0 C25.5 360.5 31.3 365.2 33.0 367.0"/>
<path d="M-5.0 479.0 C-1.2 475.0 8.7 464.3 18.0 455.0 C27.3 445.7 41.0 431.0 51.0 423.0 C61.0 415.0 71.8 413.5 78.0 407.0 C84.2 400.5 84.8 389.3 88.0 384.0 C91.2 378.7 85.2 382.3 97.0 375.0 C108.8 367.7 141.8 351.2 159.0 340.0 C176.2 328.8 186.3 318.8 200.0 308.0 C213.7 297.2 228.0 284.8 241.0 275.0 C254.0 265.2 266.8 257.0 278.0 249.0 C289.2 241.0 298.0 236.7 308.0 227.0 C318.0 217.3 329.5 201.2 338.0 191.0 C346.5 180.8 353.0 170.5 359.0 166.0 C365.0 161.5 367.2 164.3 374.0 164.0 C380.8 163.7 389.2 163.7 400.0 164.0 C410.8 164.3 420.2 164.8 439.0 166.0 C457.8 167.2 491.0 169.7 513.0 171.0 C535.0 172.3 556.7 170.3 571.0 174.0 C585.3 177.7 589.0 186.0 599.0 193.0 C609.0 200.0 617.7 205.5 631.0 216.0 C644.3 226.5 656.8 239.7 679.0 256.0 C701.2 272.3 743.2 300.3 764.0 314.0 C784.8 327.7 797.3 334.0 804.0 338.0"/>
<path d="M274.0 -6.0 C285.7 16.3 329.8 99.3 344.0 128.0 C358.2 156.7 354.7 156.7 359.0 166.0 C363.3 175.3 366.0 174.8 370.0 184.0 C374.0 193.2 376.5 206.8 383.0 221.0 C389.5 235.2 401.2 257.8 409.0 269.0 C416.8 280.2 420.0 280.8 430.0 288.0 C440.0 295.2 456.3 303.3 469.0 312.0 C481.7 320.7 493.3 332.8 506.0 340.0 C518.7 347.2 529.5 350.3 545.0 355.0 C560.5 359.7 582.3 363.3 599.0 368.0 C615.7 372.7 632.0 379.0 645.0 383.0 C658.0 387.0 667.3 388.3 677.0 392.0 C686.7 395.7 695.0 400.0 703.0 405.0 C711.0 410.0 718.5 417.5 725.0 422.0 C731.5 426.5 735.3 427.7 742.0 432.0 C748.7 436.3 758.0 442.5 765.0 448.0 C772.0 453.5 780.5 460.0 784.0 465.0 C787.5 470.0 786.0 469.3 786.0 478.0 C786.0 486.7 784.3 510.5 784.0 517.0"/>
<path d="M345.0 -6.0 C353.7 0.3 381.3 19.5 397.0 32.0 C412.7 44.5 427.0 58.5 439.0 69.0 C451.0 79.5 454.0 83.2 469.0 95.0 C484.0 106.8 516.2 130.3 529.0 140.0 C541.8 149.7 541.8 147.7 546.0 153.0 C550.2 158.3 552.7 168.8 554.0 172.0"/>
<path d="M425.0 -4.0 C421.7 -0.7 410.0 9.7 405.0 16.0 C400.0 22.3 398.7 25.5 395.0 34.0 C391.3 42.5 387.2 55.5 383.0 67.0 C378.8 78.5 373.7 93.8 370.0 103.0 C366.3 112.2 364.8 117.3 361.0 122.0 C357.2 126.7 349.3 129.5 347.0 131.0"/>
<path d="M372.0 102.0 C377.5 103.3 393.5 106.0 405.0 110.0 C416.5 114.0 435.0 123.3 441.0 126.0"/>
<path d="M441.0 126.0 L469.0 95.0"/>
<path d="M407.0 112.0 L439.0 70.0"/>
<path d="M441.0 126.0 L439.0 165.0"/>
<path d="M415.0 -6.0 C424.8 1.8 454.8 25.8 474.0 41.0 C493.2 56.2 516.5 75.2 530.0 85.0 C543.5 94.8 544.2 92.3 555.0 100.0 C565.8 107.7 586.7 125.5 595.0 131.0 C603.3 136.5 601.7 134.7 605.0 133.0 C608.3 131.3 605.8 132.0 615.0 121.0 C624.2 110.0 652.5 76.0 660.0 67.0"/>
<path d="M585.0 -6.0 C592.3 1.5 616.5 27.0 629.0 39.0 C641.5 51.0 647.0 54.7 660.0 66.0 C673.0 77.3 688.2 90.8 707.0 107.0 C725.8 123.2 756.8 148.8 773.0 163.0 C789.2 177.2 798.8 187.2 804.0 192.0"/>
<path d="M668.0 -6.0 C669.8 -3.2 669.2 3.5 679.0 11.0 C688.8 18.5 713.5 30.2 727.0 39.0 C740.5 47.8 751.8 59.0 760.0 64.0 C768.2 69.0 768.7 64.7 776.0 69.0 C783.3 73.3 799.3 86.5 804.0 90.0"/>
<path d="M776.0 68.0 C772.5 68.2 763.2 65.5 755.0 69.0 C746.8 72.5 738.5 78.3 727.0 89.0 C715.5 99.7 698.2 119.5 686.0 133.0 C673.8 146.5 663.5 157.3 654.0 170.0 C644.5 182.7 634.3 197.2 629.0 209.0 C623.7 220.8 625.7 232.2 622.0 241.0 C618.3 249.8 612.3 254.3 607.0 262.0 C601.7 269.7 600.0 271.7 590.0 287.0 C580.0 302.3 564.0 328.3 547.0 354.0 C530.0 379.7 506.0 416.5 488.0 441.0 C470.0 465.5 448.3 488.3 439.0 501.0 C429.7 513.7 433.2 514.3 432.0 517.0"/>
<path d="M727.0 92.0 C733.2 96.5 751.2 109.2 764.0 119.0 C776.8 128.8 797.3 145.7 804.0 151.0"/>
<path d="M773.0 108.0 L768.0 124.0"/>
<path d="M686.0 135.0 C694.5 140.5 723.2 159.8 737.0 168.0 C750.8 176.2 763.7 181.3 769.0 184.0"/>
<path d="M670.0 156.0 C673.5 158.3 676.0 158.5 691.0 170.0 C706.0 181.5 747.0 213.5 760.0 225.0 C773.0 236.5 764.5 233.7 769.0 239.0 C773.5 244.3 781.2 251.5 787.0 257.0 C792.8 262.5 801.2 269.5 804.0 272.0"/>
<path d="M801.0 72.0 C798.3 84.5 789.2 130.7 785.0 147.0 C780.8 163.3 778.7 163.8 776.0 170.0 C773.3 176.2 771.3 174.8 769.0 184.0 C766.7 193.2 762.0 215.8 762.0 225.0 C762.0 234.2 767.8 236.7 769.0 239.0"/>
<path d="M791.0 -6.0 C790.0 -2.7 782.8 7.3 785.0 14.0 C787.2 20.7 800.8 30.7 804.0 34.0"/>
<path d="M534.0 -6.0 C534.7 -1.2 534.3 5.2 538.0 23.0 C541.7 40.8 550.5 76.0 556.0 101.0 C561.5 126.0 566.5 150.8 571.0 173.0 C575.5 195.2 579.8 219.2 583.0 234.0 C586.2 248.8 588.3 254.3 590.0 262.0 C591.7 269.7 593.0 275.0 593.0 280.0 C593.0 285.0 590.5 290.0 590.0 292.0"/>
<path d="M478.0 -4.0 C483.3 -0.3 500.0 13.5 510.0 18.0 C520.0 22.5 533.3 22.2 538.0 23.0"/>
<path d="M533.0 170.0 L525.0 226.0"/>
<path d="M535.0 202.0 L577.0 206.0"/>
<path d="M518.0 231.0 L518.0 264.0"/>
<path d="M520.0 248.0 L587.0 251.0"/>
<path d="M384.0 222.0 C391.7 222.7 415.0 225.3 430.0 226.0 C445.0 226.7 458.8 225.2 474.0 226.0 C489.2 226.8 500.0 229.2 521.0 231.0 C542.0 232.8 583.2 235.5 600.0 237.0 C616.8 238.5 610.7 234.3 622.0 240.0 C633.3 245.7 653.5 261.3 668.0 271.0 C682.5 280.7 695.7 288.5 709.0 298.0 C722.3 307.5 741.5 323.0 748.0 328.0"/>
<path d="M679.0 256.0 C677.2 258.5 672.5 261.3 668.0 271.0 C663.5 280.7 654.7 306.8 652.0 314.0"/>
<path d="M687.0 287.0 L672.0 323.0"/>
<path d="M764.0 314.0 C761.3 316.3 752.5 321.0 748.0 328.0 C743.5 335.0 738.8 351.3 737.0 356.0"/>
<path d="M590.0 287.0 C591.2 288.0 593.8 291.5 597.0 293.0 C600.2 294.5 598.7 291.8 609.0 296.0 C619.3 300.2 637.5 308.0 659.0 318.0 C680.5 328.0 720.3 346.3 738.0 356.0 C755.7 365.7 760.5 372.7 765.0 376.0"/>
<path d="M597.0 293.0 C597.7 296.0 598.5 301.2 601.0 311.0 C603.5 320.8 609.7 341.5 612.0 352.0 C614.3 362.5 614.5 370.3 615.0 374.0"/>
<path d="M804.0 340.0 C797.5 346.5 778.3 364.0 765.0 379.0 C751.7 394.0 736.8 416.0 724.0 430.0 C711.2 444.0 695.7 454.8 688.0 463.0 C680.3 471.2 680.7 474.8 678.0 479.0 C675.3 483.2 678.3 482.2 672.0 488.0 C665.7 493.8 645.3 509.7 640.0 514.0"/>
<path d="M644.0 384.0 L629.0 437.0"/>
<path d="M673.0 395.0 C670.7 401.2 661.8 423.7 659.0 432.0 C656.2 440.3 656.7 438.8 656.0 445.0 C655.3 451.2 654.8 463.5 655.0 469.0 C655.2 474.5 655.3 474.8 657.0 478.0 C658.7 481.2 662.5 486.3 665.0 488.0 C667.5 489.7 670.8 488.0 672.0 488.0"/>
<path d="M161.0 511.0 C167.5 509.0 191.5 501.0 200.0 499.0 C208.5 497.0 197.3 502.0 212.0 499.0 C226.7 496.0 270.8 486.7 288.0 481.0 C305.2 475.3 296.3 470.2 315.0 465.0 C333.7 459.8 371.2 453.7 400.0 450.0 C428.8 446.3 454.7 444.3 488.0 443.0 C521.3 441.7 577.7 442.7 600.0 442.0 C622.3 441.3 612.2 438.8 622.0 439.0 C631.8 439.2 644.8 442.2 659.0 443.0 C673.2 443.8 699.0 443.8 707.0 444.0"/>
<path d="M485.0 517.0 C488.2 514.2 494.8 504.0 504.0 500.0 C513.2 496.0 528.5 495.3 540.0 493.0 C551.5 490.7 562.0 488.8 573.0 486.0 C584.0 483.2 592.3 478.3 606.0 476.0 C619.7 473.7 646.8 472.7 655.0 472.0"/>
<path d="M593.0 517.0 C596.2 515.2 604.7 508.8 612.0 506.0 C619.3 503.2 631.0 500.3 637.0 500.0 C643.0 499.7 646.2 503.3 648.0 504.0"/>
<path d="M672.0 488.0 C677.5 490.5 697.0 498.2 705.0 503.0 C713.0 507.8 717.5 514.7 720.0 517.0"/>
<path d="M674.0 488.0 L671.0 517.0"/>
<path d="M804.0 400.0 L773.0 452.0"/>
<path d="M804.0 422.0 C801.8 426.0 793.5 439.8 791.0 446.0 C788.5 452.2 788.3 455.2 789.0 459.0 C789.7 462.8 792.5 466.0 795.0 469.0 C797.5 472.0 802.5 475.7 804.0 477.0"/>
<path d="M786.0 472.0 L804.0 482.0"/>
<path d="M499.0 444.0 L499.0 517.0"/>
<path d="M510.0 173.0 C504.3 181.3 489.3 204.0 476.0 223.0 C462.7 242.0 437.7 276.3 430.0 287.0"/>
<path d="M430.0 287.0 C429.5 294.5 427.7 315.5 427.0 332.0 C426.3 348.5 425.8 366.7 426.0 386.0 C426.2 405.3 426.5 430.7 428.0 448.0 C429.5 465.3 433.5 478.5 435.0 490.0 C436.5 501.5 436.7 512.5 437.0 517.0"/>
<path d="M428.0 384.0 C436.8 384.0 469.5 381.8 481.0 384.0 C492.5 386.2 494.3 394.8 497.0 397.0"/>
<path d="M481.0 384.0 C483.3 377.8 492.5 354.5 495.0 347.0 C497.5 339.5 495.8 340.3 496.0 339.0"/>
<path d="M370.0 366.0 C375.0 365.2 379.7 365.0 400.0 361.0 C420.3 357.0 476.7 345.2 492.0 342.0"/>
<path d="M461.0 206.0 L478.0 215.0"/>
<path d="M430.0 226.0 C429.8 227.3 433.0 228.3 429.0 234.0 C425.0 239.7 409.8 255.7 406.0 260.0"/>
<path d="M409.0 270.0 L358.0 328.0"/>
<path d="M279.0 253.0 L358.0 328.0"/>
<path d="M358.0 328.0 C359.3 331.2 363.8 340.0 366.0 347.0 C368.2 354.0 367.5 352.7 371.0 370.0 C374.5 387.3 383.2 432.2 387.0 451.0 C390.8 469.8 391.8 474.7 394.0 483.0 C396.2 491.3 397.8 495.3 400.0 501.0 C402.2 506.7 405.8 514.3 407.0 517.0"/>
<path d="M277.0 251.0 C276.5 254.0 276.3 263.5 274.0 269.0 C271.7 274.5 264.7 280.3 263.0 284.0 C261.3 287.7 257.7 283.2 264.0 291.0 C270.3 298.8 291.5 321.3 301.0 331.0 C310.5 340.7 311.0 346.7 321.0 349.0 C331.0 351.3 354.3 345.7 361.0 345.0"/>
<path d="M181.0 324.0 C183.3 326.7 190.7 334.5 195.0 340.0 C199.3 345.5 198.5 345.8 207.0 357.0 C215.5 368.2 236.3 394.0 246.0 407.0 C255.7 420.0 260.0 424.7 265.0 435.0 C270.0 445.3 271.8 461.3 276.0 469.0 C280.2 476.7 280.7 473.0 290.0 481.0 C299.3 489.0 325.0 511.0 332.0 517.0"/>
<path d="M265.0 350.0 C268.8 354.8 284.0 373.0 288.0 379.0 C292.0 385.0 288.8 384.8 289.0 386.0"/>
<path d="M248.0 407.0 C253.5 403.7 273.7 389.3 281.0 387.0 C288.3 384.7 277.0 394.3 292.0 393.0 C307.0 391.7 357.8 381.3 371.0 379.0"/>
<path d="M276.0 485.0 L286.0 517.0"/>
<path d="M175.0 409.0 C177.7 414.0 187.5 431.8 191.0 439.0 C194.5 446.2 194.2 444.8 196.0 452.0 C197.8 459.2 199.8 474.2 202.0 482.0 C204.2 489.8 207.8 496.2 209.0 499.0"/>
<path d="M78.0 408.0 C81.2 409.2 91.0 413.7 97.0 415.0 C103.0 416.3 110.2 413.8 114.0 416.0 C117.8 418.2 118.2 424.2 120.0 428.0 C121.8 431.8 115.8 442.2 125.0 439.0 C134.2 435.8 161.3 418.2 175.0 409.0 C188.7 399.8 204.2 391.8 207.0 384.0 C209.8 376.2 192.8 367.2 192.0 362.0 C191.2 356.8 200.3 354.5 202.0 353.0"/>
<path d="M158.0 458.0 L177.0 517.0"/>
<path d="M77.0 408.0 C78.0 418.2 81.2 450.8 83.0 469.0 C84.8 487.2 87.2 509.0 88.0 517.0"/>
<path d="M18.0 455.0 C22.3 459.7 36.7 472.7 44.0 483.0 C51.3 493.3 59.0 511.3 62.0 517.0"/>
<path d="M-5.0 482.0 L18.0 517.0"/>
<path d="M-5.0 376.0 C-3.3 379.7 5.0 390.7 5.0 398.0 C5.0 405.3 -3.3 416.3 -5.0 420.0"/>
<path d="M5.0 403.0 C8.0 403.7 15.3 403.7 23.0 407.0 C30.7 410.3 46.3 420.3 51.0 423.0"/>
</g><g fill="#f00" font-family="Liberation Sans" font-weight="bold" font-size="13.6px" letter-spacing="0.75" stroke="#f00" stroke-width="0.4">
<text x="325" y="50">Brand</text>
<text x="214" y="137">Eschenbüel</text>
<text x="573.5" y="78">Strick</text>
<text x="698" y="18.8">Hasenbüel</text>
<text x="40" y="192.5">Rüti</text>
<text x="145" y="272.5">Rüti</text>
<text x="41" y="288">Sunnenberg</text>
<text x="297.5" y="243.8">Krämeracher</text>
<text x="491" y="311">Kirchuster</text>
<text x="12" y="354">Wannen</text>
<text x="80" y="425">Eselstock</text>
<text x="96" y="489.5">Halden</text>
<text x="281" y="432">Hohfuren</text>
<text x="445" y="419.6">Pünt</text>
</g></svg>
</body></html>
